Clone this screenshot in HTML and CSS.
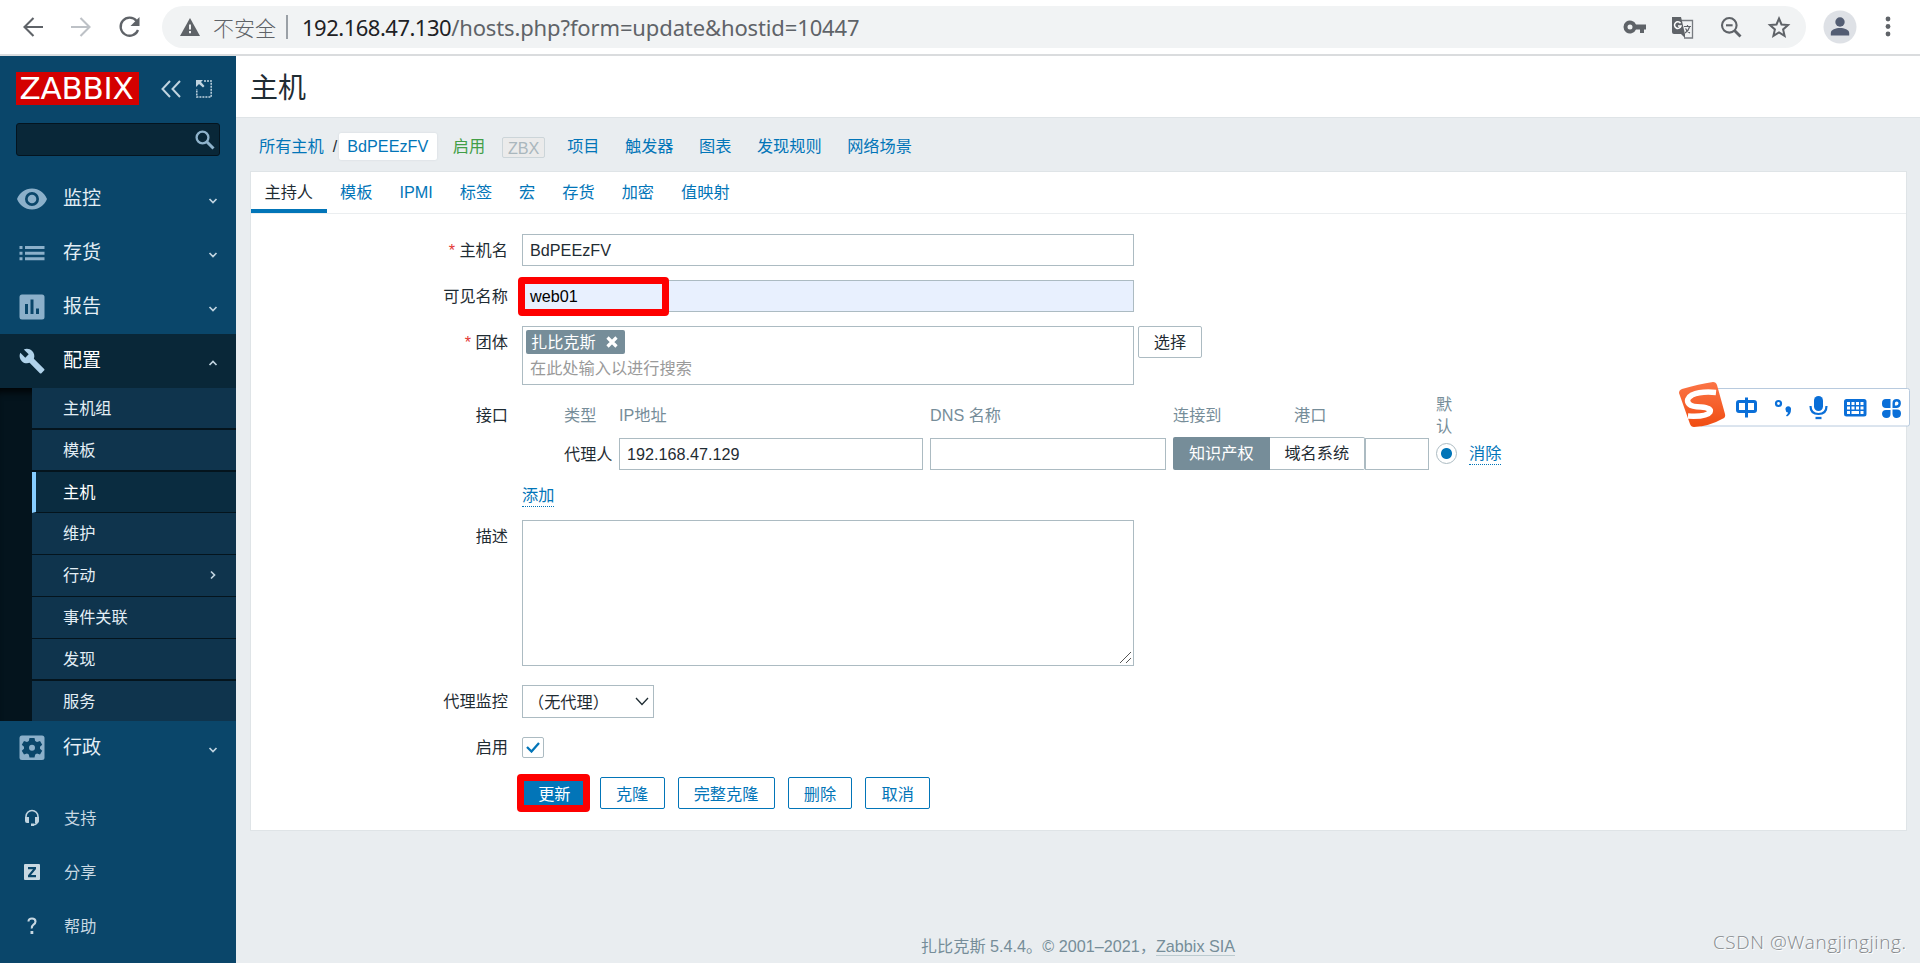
FILE: index.html
```html
<!DOCTYPE html>
<html lang="zh-CN">
<head>
  <meta charset="UTF-8">
  <title>主机</title>
  <link rel="stylesheet" href="styles.css">
</head>
<body>
  <!-- Browser toolbar -->
  <div class="browser-bar">
    <div class="nav-buttons">
      <svg width="24" height="24" viewBox="0 0 24 24" fill="none" stroke="#5f6368" stroke-width="2.1"><path d="M22 12H4M12.500 3L3.500 12l9 9"/></svg>
      <svg width="24" height="24" viewBox="0 0 24 24" fill="none" stroke="#bdc1c6" stroke-width="2.100"><path d="M2 12h18M11.500 3l9 9-9 9"/></svg>
      <svg width="24" height="24" viewBox="0 0 24 24"><path d="M19.600 6A9 9 0 1 0 21 15" fill="none" stroke="#5f6368" stroke-width="2.300"/><path d="M22.500 2v9h-9z" fill="#5f6368"/></svg>
    </div>
    <div class="omnibox">
      <svg class="warn" width="20" height="18" viewBox="0 0 20 18"><path d="M10 0l10 18H0z" fill="#5f6368"/><path d="M9 6.500h2v5H9zM9 13h2v2.200H9z" fill="#f1f3f4"/></svg>
      <span class="insecure">不安全</span>
      <span class="divider"></span>
      <span class="url"><b>192.168.47.130</b>/hosts.php?form=update&amp;hostid=10447</span>
      <div class="omni-icons">
        <svg width="24" height="24" viewBox="0 0 24 24" fill="#5f6368"><path fill-rule="evenodd" d="M13 9.500A6.500 6.500 0 1 0 13 14.500h4V18h4v-3.500h2v-5zM7 9.500a2.500 2.500 0 1 1 0 5 2.500 2.500 0 0 1 0-5z"/></svg>
        <svg width="24" height="24" viewBox="0 0 24 24"><path d="M10 5.500h11.500V23H13" fill="none" stroke="#777b80" stroke-width="1.300"/><path d="M1 2h9l4 17H3q-2 0-2-2z" fill="#5f6368"/><path d="M10 19l4 4v-4z" fill="#5f6368"/><path d="M9.500 8.200A3.300 3.300 0 1 0 10 11H7" fill="none" stroke="#fff" stroke-width="1.500"/><path d="M13 11.500h7M16.500 10v1.500M18.500 12q-1 4-4.500 6M14.500 13.500q1.500 3 4.500 4.500" fill="none" stroke="#5f6368" stroke-width="1.200"/></svg>
        <svg width="24" height="24" viewBox="0 0 24 24" fill="none" stroke="#5f6368" stroke-width="2.100"><circle cx="10.300" cy="10.300" r="7.300"/><path d="M7 10.300h6.600"/><path d="M15.500 15.500l6 6" stroke-width="2.800"/></svg>
        <svg width="24" height="24" viewBox="0 0 24 24" fill="none" stroke="#5f6368" stroke-width="2"><path d="M12 3.500l2.500 6 6.500.6-4.900 4.300 1.500 6.400-5.600-3.400-5.600 3.400 1.500-6.400L3 10.100l6.500-.6z"/></svg>
      </div>
    </div>
    <svg class="avatar" width="34" height="34" viewBox="0 0 34 34"><circle cx="17" cy="17" r="16.500" fill="#dee1e6"/><circle cx="17" cy="12" r="4.700" fill="#535d73"/><path d="M7.800 25.500v-2.500c0-3.400 5-5 9.200-5s9.200 1.600 9.200 5v2.500z" fill="#535d73"/></svg>
    <svg class="dots" width="6" height="22" viewBox="0 0 6 22" fill="#5f6368"><circle cx="3" cy="3" r="2.400"/><circle cx="3" cy="10.500" r="2.400"/><circle cx="3" cy="18" r="2.400"/></svg>
  </div>

  <div class="wrapper">
    <!-- Sidebar -->
    <aside class="sidebar">
      <div class="sidebar-header">
        <div class="logo">ZABBIX</div>
        <svg class="collapse" width="20" height="18" viewBox="0 0 20 18" fill="none" stroke="#c0d4e0" stroke-width="2"><path d="M9 1L1.500 9 9 17M19 1l-7.500 8 7.500 8"/></svg>
        <svg class="kiosk" width="16" height="18" viewBox="0 0 16 18"><path d="M8 1h7.200v16H.8V9" fill="none" stroke="#c0d4e0" stroke-width="1.500" stroke-dasharray="2 1"/><path d="M0 0h7L5 2l3.500 4L7 7.500 3 4 0 7z" fill="#c0d4e0"/></svg>
      </div>
      <div class="search">
        <svg width="20" height="20" viewBox="0 0 20 20" fill="none" stroke="#8fb3cc"><circle cx="7.500" cy="7.500" r="5.900" stroke-width="2.300"/><path d="M12 12l6.500 6.500" stroke-width="3"/></svg>
      </div>
      <ul class="menu">
        <li class="menu-item">
          <svg class="icon" width="30" height="22" viewBox="0 0 30 22"><path fill="#8cb0ca" fill-rule="evenodd" d="M15 .5C8 .5 2.500 4.800 0 11c2.500 6.200 8 10.500 15 10.500S27.500 17.200 30 11C27.500 4.800 22 .5 15 .5zm0 17.500a7 7 0 1 1 0-14 7 7 0 0 1 0 14z"/><circle cx="15" cy="11" r="4.300" fill="#8cb0ca"/></svg>
          <span>监控</span>
          <svg class="arrow" width="10" height="6" viewBox="0 0 10 6"><path d="M1.500 1L5 4.500 8.500 1"/></svg>
        </li>
        <li class="menu-item">
          <svg class="icon" width="30" height="16" viewBox="0 0 30 16" fill="#8cb0ca"><path d="M2.500 1h3v3h-3zM2.500 6.700h3v3h-3zM2.500 12.300h3v3h-3zM8 1h19.500v3H8zM8 6.700h19.500v3H8zM8 12.300h19.500v3H8z"/></svg>
          <span>存货</span>
          <svg class="arrow" width="10" height="6" viewBox="0 0 10 6"><path d="M1.500 1L5 4.500 8.500 1"/></svg>
        </li>
        <li class="menu-item">
          <svg class="icon" width="30" height="26" viewBox="0 0 30 26"><rect x="2.500" y=".5" width="25" height="25" rx="2.500" fill="#8cb0ca"/><path d="M8 10h3v10H8zM13.500 5.500h3V20h-3zM19 14.500h3V20h-3z" fill="#0a466a"/></svg>
          <span>报告</span>
          <svg class="arrow" width="10" height="6" viewBox="0 0 10 6"><path d="M1.500 1L5 4.500 8.500 1"/></svg>
        </li>
        <li class="menu-item open">
          <svg class="icon" width="30" height="26" viewBox="0 0 30 26"><path transform="translate(1.500 -.5) scale(1.130)" fill="#b0d2ea" d="M22.700 19l-9.100-9.100c.9-2.300.4-5-1.500-6.900-2-2-5-2.400-7.400-1.300L9 6 6 9 1.600 4.700C.4 7.100.9 10.100 2.900 12.100c1.900 1.900 4.600 2.400 6.900 1.500l9.100 9.100c.4.4 1 .4 1.400 0l2.300-2.300c.5-.4.5-1.100.1-1.400z"/></svg>
          <span>配置</span>
          <svg class="arrow" width="10" height="6" viewBox="0 0 10 6"><path d="M1.500 5L5 1.500 8.500 5"/></svg>
        </li>
      </ul>
      <ul class="submenu">
        <li class="thick">主机组</li>
        <li class="thick">模板</li>
        <li class="selected">主机</li>
        <li>维护</li>
        <li>行动 <svg class="arrow" width="6" height="10" viewBox="0 0 6 10"><path d="M1 1.500L4.500 5 1 8.500"/></svg></li>
        <li>事件关联</li>
        <li class="thick">发现</li>
        <li class="last">服务</li>
      </ul>
      <ul class="menu">
        <li class="menu-item">
          <svg class="icon" width="30" height="26" viewBox="0 0 30 26"><rect x="2.500" y=".5" width="25" height="24.500" rx="2.500" fill="#8cb0ca"/><path fill="#0a466a" fill-rule="evenodd" d="M12.500 3h5l.7 3 1.800 1 3-1 2.200 3.800-2.200 2v2l2.200 2-2.200 3.800-3-1-1.800 1-.7 3h-5l-.7-3-1.800-1-3 1-2.200-3.800 2.200-2v-2l-2.200-2L7 6l3 1 1.800-1zM15 9.800a3 3 0 1 0 0 6 3 3 0 0 0 0-6z"/></svg>
          <span>行政</span>
          <svg class="arrow" width="10" height="6" viewBox="0 0 10 6"><path d="M1.500 1L5 4.500 8.500 1"/></svg>
        </li>
      </ul>
      <ul class="user-menu">
        <li><svg width="16" height="18" viewBox="0 0 16 18"><path d="M2 10V7.500a6 6 0 0 1 12 0V11q0 4.500-5.500 5" fill="none" stroke="#c0d4e0" stroke-width="1.600"/><path d="M1 8h4v6H3q-2 0-2-2zM11 8h4v4q0 2-2 2h-2zM7 14.500h3v2.500H7z" fill="#c0d4e0"/></svg><span>支持</span></li>
        <li><svg width="16" height="16" viewBox="0 0 16 16"><rect width="16" height="16" rx="1" fill="#c8d8e2"/><path d="M4 3h8v2l-5 6h5v2.200H4v-2L9 5.200H4z" fill="#0a466a"/></svg><span>分享</span></li>
        <li><svg width="16" height="18" viewBox="0 0 16 18"><path d="M4.500 4.500Q4.500 1.500 8 1.500t3.500 3q0 1.800-2 3.200T7.800 11.500" fill="none" stroke="#c8d8e2" stroke-width="2.100"/><path d="M6.500 14h2.800v3H6.500z" fill="#c8d8e2"/></svg><span>帮助</span></li>
      </ul>
    </aside>

    <!-- Page content -->
    <div class="content">
      <header class="page-title"><h1>主机</h1></header>

      <nav class="breadcrumbs">
        <a>所有主机</a><i>/</i><a class="current">BdPEEzFV</a>
        <a class="enabled">启用</a><span class="zbx">ZBX</span>
        <a>项目</a><a>触发器</a><a>图表</a><a>发现规则</a><a>网络场景</a>
      </nav>

      <main class="panel">
        <div class="tabs">
          <a class="active">主持人</a><a>模板</a><a>IPMI</a><a>标签</a><a>宏</a><a>存货</a><a>加密</a><a>值映射</a>
        </div>
        <form class="form">
          <div class="row">
            <label><em>*</em> 主机名</label>
            <div class="field wide">BdPEEzFV</div>
          </div>
          <div class="row">
            <label>可见名称</label>
            <div class="field wide autofill">web01<span class="mark mark-name"></span></div>
          </div>
          <div class="row">
            <label><em>*</em> 团体</label>
            <div class="multiselect">
              <span class="tag">扎比克斯 <svg width="12" height="12" viewBox="0 0 12 12"><path d="M1.500 1.500l9 9M10.500 1.500l-9 9" stroke="#fff" stroke-width="3.200"/></svg></span>
              <span class="placeholder">在此处输入以进行搜索</span>
            </div>
            <div class="select-btn">选择</div>
          </div>
          <div class="row interfaces">
            <label>接口</label>
            <div class="iface">
              <div class="iface-grid iface-head">
                <span>类型</span><span>IP地址</span><span>DNS 名称</span><span>连接到</span><span class="port-title">港口</span><span class="default-title">默认</span>
              </div>
              <div class="iface-grid">
                <span>代理人</span>
                <div class="field ip">192.168.47.129</div>
                <div class="field dns"></div>
                <div class="toggle"><span class="on">知识产权</span><span>域名系统</span></div>
                <div class="field port"></div>
                <span class="radio"></span>
                <a class="dotted remove">消除</a>
              </div>
              <a class="dotted add">添加</a>
            </div>
          </div>
          <div class="row description">
            <label>描述</label>
            <div class="textarea"><svg width="13" height="13" viewBox="0 0 13 13"><path d="M1 12L12 1M7 12l5-5" stroke="#555" stroke-width="1"/></svg></div>
          </div>
          <div class="row proxy">
            <label>代理监控</label>
            <div class="select">（无代理）<svg width="14" height="9" viewBox="0 0 14 9"><path d="M1 1l6 6.500L13 1" fill="none" stroke="#1f2c33" stroke-width="1.300"/></svg></div>
          </div>
          <div class="row enable">
            <label>启用</label>
            <div class="checkbox"><svg width="14" height="11" viewBox="0 0 14 11"><path d="M1 5l4.500 4.500L13 1" fill="none" stroke="#0275b8" stroke-width="2.300"/></svg></div>
          </div>
          <div class="row buttons">
            <div class="btn primary">更新<span class="mark mark-update"></span></div>
            <div class="btn">克隆</div>
            <div class="btn">完整克隆</div>
            <div class="btn">删除</div>
            <div class="btn">取消</div>
          </div>
        </form>
      </main>

      <footer>扎比克斯 5.4.4。© 2001–2021，<a>Zabbix SIA</a></footer>
    </div>
  </div>

  <!-- Floating input method bar -->
  <div class="ime">
    <svg width="232" height="48" viewBox="0 0 232 48">
      <defs><linearGradient id="sg" x1="0" y1="0" x2="0" y2="1"><stop offset="0" stop-color="#fb7446"/><stop offset="1" stop-color="#f04d12"/></linearGradient></defs>
      <rect x="20.500" y="7.500" width="210" height="37.500" rx="2" fill="#fff" stroke="#b8cade"/>
      <path d="M3 8Q20 3 34 1q3 0 4 3l8 29q1 4-3 5-12 7-28 8-3 0-4-3L0 12q0-3 3-4z" fill="url(#sg)"/>
      <path d="M37 11.500Q22 10 13 14q-7 4-3 9 3 3 12 3 11 1 9 5-3 5-22 4" fill="none" stroke="#fff" stroke-width="5.500"/>
      <g fill="none" stroke="#0a6fd8" stroke-width="3">
        <rect x="58.500" y="20.500" width="18" height="10" rx="1.500"/><path d="M67.500 16.500v20"/>
        <circle cx="99.500" cy="22.500" r="2.500" stroke-width="2.200"/>
        <path d="M131.500 25q0 8 8 8t8-8" stroke-width="2.200"/><path d="M136.500 37h6" stroke-width="2.300"/>
      </g>
      <g fill="#0a6fd8">
        <path d="M106.500 28.500a2.800 2.800 0 1 1 5.500 0q0 5-4 7l-1-1q2-1.500 2-3-2.500-.5-2.500-3z"/>
        <rect x="135" y="15" width="9" height="15" rx="4.500"/>
        <rect x="165" y="18" width="22.500" height="17.500" rx="2.500"/>
        <path d="M203 22q0-4 4-4h4.500v9H207q-4 0-4-4zM203 33q0-4 4-4h4.500v4q0 4-4 4t-4.500-4zM213.500 28.500h4.500q4 0 4 4t-4 4.500-4.500-4z"/>
      </g>
      <path d="M168 21h3v3h-3zM172.500 21h3v3h-3zM177 21h3v3h-3zM181.500 21h3v3h-3zM168 25.500h3v3h-3zM172.500 25.500h3v3h-3zM177 25.500h3v3h-3zM181.500 25.500h3v3h-3zM168 30h3v3h-3zM172.500 30h7.500v3h-7.500zM181.500 30h3v3h-3z" fill="#fff"/>
      <path d="M214.700 25.800v-3.500q0-3 3-3t3 3-3 3.500z" fill="none" stroke="#0a6fd8" stroke-width="2.400"/>
    </svg>
  </div>
  <div class="watermark">CSDN @Wangjingjing.</div>
</body>
</html>
```
FILE: styles.css
```css
* {
  box-sizing: border-box;
}

body {
  margin: 0;
  width: 1920px;
  height: 963px;
  overflow: hidden;
  font-family: "Liberation Sans", "Noto Sans CJK SC", sans-serif;
  font-size: 16.2px;
  line-height: 22px;
  color: #1f2c33;
  background-color: #e9edf0;
}

ul {
  list-style: none;
  margin: 0;
  padding: 0;
}

svg {
  display: block;
  flex: none;
}

a {
  color: #0275b8;
}

/* Browser toolbar */
.browser-bar {
  display: flex;
  align-items: center;
  height: 56px;
  padding-bottom: 2px;
  background-color: #fff;
  border-bottom: 2px solid #dadcde;
}

.nav-buttons {
  display: flex;
  gap: 24px;
  width: 162px;
  padding: 1px 0 0 21px;
}

.omnibox {
  display: flex;
  align-items: center;
  width: 1644px;
  height: 42px;
  margin-top: 2px;
  padding-left: 18px;
  border-radius: 21px;
  background-color: #f1f3f4;
  color: #5f6368;
  font-family: "Noto Sans", "Noto Sans CJK SC", sans-serif;
  font-size: 22px;
}

.insecure {
  width: 63px;
  margin-left: 13px;
  padding-bottom: 1px;
  font-family: "Noto Sans CJK SC", sans-serif;
  font-size: 21px;
  font-weight: 300;
}

.divider {
  width: 2px;
  height: 24px;
  margin: 0 14px 0 10px;
  background-color: #9aa0a6;
}

.url {
  padding-bottom: 1px;
  letter-spacing: -0.13px;
}

.url b {
  font-weight: normal;
  letter-spacing: -0.5px;
  color: #202124;
}

.omni-icons {
  display: flex;
  gap: 24px;
  margin-left: auto;
  padding-right: 15px;
}

.avatar {
  margin: 2px 28px 0 17px;
}

.dots {
  margin-top: 2px;
}

/* Sidebar */
.wrapper {
  display: flex;
  height: 907px;
}

.sidebar {
  display: flex;
  flex-direction: column;
  width: 236px;
  background-color: #0a466a;
}

.sidebar-header {
  display: flex;
  align-items: center;
  padding: 16px 0 0 16px;
}

.logo {
  width: 123px;
  height: 33px;
  padding-right: 2px;
  background-color: #d40000;
  color: #fff;
  font: 31px/33px "DejaVu Sans", sans-serif;
  letter-spacing: -0.2px;
  text-align: center;
}

.collapse {
  margin-left: 22px;
}

.kiosk {
  margin-left: 15px;
}

.search {
  display: flex;
  align-items: center;
  justify-content: flex-end;
  width: 204px;
  height: 33px;
  margin: 18px 0 16px 16px;
  padding-right: 4px;
  border: 1px solid #04141f;
  border-radius: 3px;
  background-color: #092738;
}

.menu-item {
  display: flex;
  align-items: center;
  height: 54px;
  padding: 0 18px 0 17px;
  font-size: 19px;
  color: #e3eef5;
}

.menu-item span {
  margin-left: 16px;
}

.arrow {
  margin: 4px 0 0 auto;
  fill: none;
  stroke: #c0d4e0;
  stroke-width: 1.7;
}

.open {
  background-color: #092738;
  color: #fff;
}

.submenu {
  padding-left: 32px;
  background-color: #04141d;
  box-shadow: inset 0 9px 9px -6px #000;
}

.submenu li {
  display: flex;
  align-items: center;
  height: 42px;
  padding: 0 20px 1px 31px;
  border-bottom: 1px solid #04141d;
  background-color: #0f344d;
  color: #e3eef5;
}

.submenu .arrow {
  margin-top: 0;
}

.submenu .thick {
  padding-bottom: 0;
  border-bottom-width: 2px;
}

.submenu .selected {
  height: 41px;
  padding-left: 27px;
  border-left: 4px solid #86cdff;
  background-color: #0a2c40;
  color: #fff;
}

.submenu .last {
  height: 40px;
  border-bottom: 0;
}

.user-menu {
  margin-top: auto;
  padding-bottom: 10px;
}

.user-menu li {
  display: flex;
  align-items: center;
  gap: 24px;
  height: 54px;
  padding-left: 24px;
  color: #c8d8e2;
}

/* Content */
.content {
  display: flex;
  flex-direction: column;
  flex: 1;
}

.page-title {
  height: 62px;
  padding: 17px 0 0 14px;
  background-color: #fff;
  border-bottom: 1px solid #dfe4e7;
}

h1 {
  margin: 0;
  font-size: 28px;
  font-weight: normal;
  line-height: 32px;
}

.breadcrumbs {
  display: flex;
  align-items: center;
  height: 53px;
  padding: 3px 0 0 23px;
}

.breadcrumbs a {
  margin-right: 25.5px;
}

.breadcrumbs a:first-child {
  margin-right: 9px;
}

.breadcrumbs i {
  width: 6px;
  font-style: normal;
}

.breadcrumbs .current {
  width: 98px;
  height: 27px;
  margin: 1px 16px 0 0;
  border-radius: 2px;
  background-color: #fff;
  box-shadow: 0 0 2px #cfd6da;
  line-height: 27px;
  text-align: center;
}

.breadcrumbs .enabled {
  margin-right: 17px;
  color: #429e47;
}

.zbx {
  width: 43px;
  height: 21px;
  margin: 3px 22px 0 0;
  border: 1px solid #ccd5d9;
  border-radius: 2px;
  background-color: #ebebeb;
  color: #aab7bd;
  line-height: 20px;
  text-align: center;
}

.panel {
  width: 1657px;
  height: 660px;
  margin-left: 14px;
  border: 1px solid #dfe4e7;
  background-color: #fff;
}

.tabs {
  display: flex;
  height: 42px;
  border-bottom: 1px solid #ebeef0;
}

.tabs a {
  height: 41px;
  padding: 0 13.5px;
  line-height: 40px;
}

.tabs .active {
  border-bottom: 4px solid #0275b8;
  color: #1f2c33;
}

.form {
  padding-top: 20px;
}

.row {
  display: flex;
  margin-bottom: 14px;
}

label {
  width: 257px;
  margin-right: 14px;
  line-height: 32px;
  text-align: right;
}

label em {
  color: #e33734;
  font-style: normal;
}

.field {
  position: relative;
  height: 32px;
  padding-left: 7px;
  border: 1px solid #acbbc2;
  background-color: #fff;
  line-height: 30px;
}

.wide {
  width: 612px;
}

.autofill {
  background-color: #e8f0fe;
  color: #000;
}

/* Red highlight frames over the fields */
.mark {
  position: absolute;
  border: 7px solid #fe0000;
  border-radius: 4px;
}

.mark-name {
  left: -5px;
  top: -4px;
  width: 151px;
  height: 39px;
}

.mark-update {
  left: -6px;
  top: -4px;
  width: 73px;
  height: 38px;
}

.multiselect {
  width: 612px;
  height: 59px;
  padding: 3px;
  border: 1px solid #acbbc2;
}

.tag {
  display: flex;
  align-items: center;
  gap: 10px;
  width: 99px;
  height: 24px;
  padding-left: 5px;
  border-radius: 2px;
  background-color: #768d99;
  color: #fff;
}

.placeholder {
  display: block;
  padding: 3px 0 0 4px;
  color: #9a9a9a;
}

.select-btn {
  width: 64px;
  height: 32px;
  margin-left: 4px;
  border: 1px solid #acbbc2;
  border-radius: 2px;
  line-height: 31px;
  text-align: center;
}

.interfaces {
  margin: -6px 0 0;
}

.interfaces label {
  padding-top: 6px;
}

.iface {
  width: 1000px;
}

.iface-grid {
  display: grid;
  grid-template-columns: 55px 311px 243px 192px 71px 33px 60px;
  align-items: center;
  height: 33px;
  padding-left: 42px;
}

.iface-head {
  height: 44px;
  color: #768d99;
}

.iface-grid > .field {
  align-self: end;
}

.ip {
  width: 304px;
}

.dns {
  width: 236px;
}

.port {
  width: 64px;
}

.port-title {
  margin-left: -71px;
}

.default-title {
  width: 17px;
}

.toggle {
  display: flex;
  height: 33px;
  line-height: 32px;
  text-align: center;
}

.toggle span {
  width: 96px;
  border: 1px solid #acbbc2;
  border-left: 0;
  border-radius: 0 2px 2px 0;
  line-height: 30px;
}

.toggle .on {
  width: 97px;
  border: 0;
  border-radius: 2px 0 0 2px;
  background-color: #768d99;
  color: #fff;
  line-height: 32px;
}

.radio {
  width: 21px;
  height: 21px;
  border: 1px solid #acbbc2;
  border-radius: 50%;
  background: radial-gradient(circle, #0275b8 5px, #fff 6px);
}

.dotted {
  justify-self: start;
  border-bottom: 1px dotted #0275b8;
  line-height: 21px;
}

.remove {
  margin-top: 1px;
}

.add {
  display: inline-block;
  margin-top: 15px;
}

.description {
  margin: 13px 0 19px;
}

.textarea {
  display: flex;
  align-items: flex-end;
  justify-content: flex-end;
  width: 612px;
  height: 146px;
  padding: 1px;
  border: 1px solid #acbbc2;
}

.proxy {
  height: 33px;
}

.select {
  display: flex;
  align-items: center;
  justify-content: space-between;
  width: 132px;
  padding: 0 4px 0 5px;
  border: 1px solid #acbbc2;
}

.enable {
  align-items: center;
  height: 32px;
  margin: -1px 0 14px;
}

.checkbox {
  display: flex;
  align-items: center;
  justify-content: center;
  width: 22px;
  height: 21px;
  border: 1px solid #acbbc2;
  border-radius: 2px;
}

.buttons {
  gap: 13px;
  padding-left: 271px;
}

.btn {
  position: relative;
  height: 32px;
  padding: 0 15.2px;
  border: 1px solid #0275b8;
  border-radius: 2px;
  color: #0275b8;
  line-height: 32px;
}

.primary {
  background-color: #0275b8;
  color: #fff;
}

footer {
  margin: auto auto 6px;
  color: #768d99;
}

footer a {
  border-bottom: 1px solid #bccbd0;
  color: #768d99;
}

.ime {
  position: absolute;
  left: 1679px;
  top: 381px;
}

.watermark {
  position: absolute;
  left: 1713px;
  top: 931px;
  color: #85898c;
  font-family: "Open Sans", "Noto Sans", sans-serif;
  font-size: 19px;
  font-weight: 300;
  letter-spacing: 0.55px;
  text-shadow: 1px 1px 0 #fff;
  white-space: nowrap;
}
```
